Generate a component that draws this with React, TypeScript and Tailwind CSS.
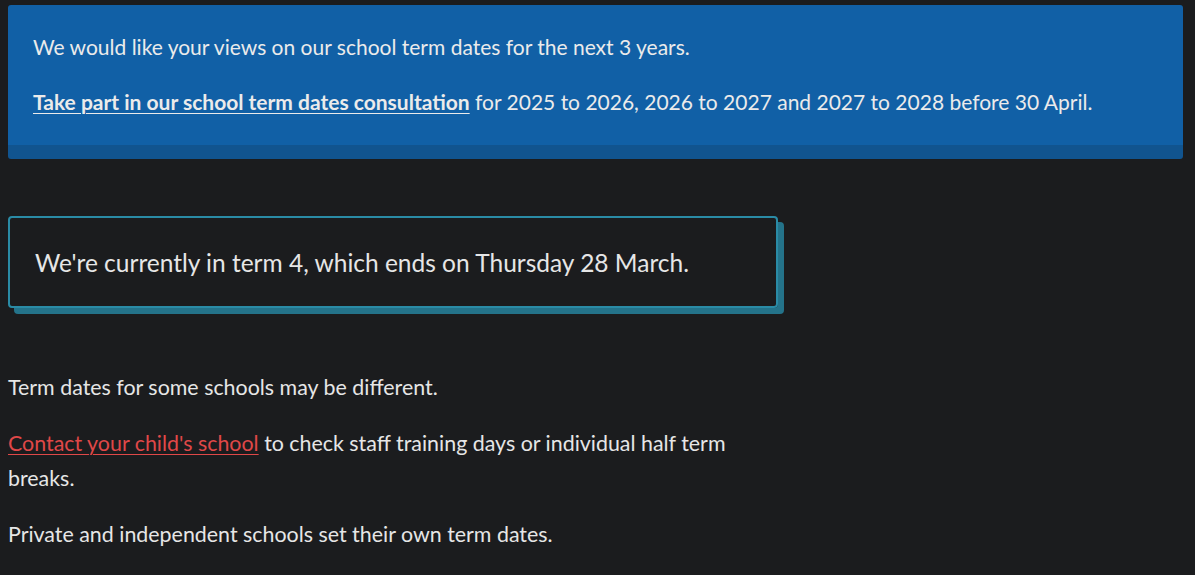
export default function App() {
  return (
    <div
      className="min-h-[575px] bg-[#1b1c1e] pl-2 pr-3 pt-[5px] text-[#e6e6e6]"
      style={{ fontFamily: 'Lato, "Noto Sans", sans-serif' }}
    >
      <div className="rounded-[3px] border-b-[14px] border-[#11548f] bg-[#1160a6] px-[25px] pb-[27px] pt-[26px] text-[21px] leading-[32px] text-[#ebebeb]">
        <p>We would like your views on our school term dates for the next 3 years.</p>
        <p className="mt-[23px]">
          <a href="#" className="font-bold underline underline-offset-[3px] decoration-1">
            Take part in our school term dates consultation
          </a>{' '}
          for 2025 to 2026, 2026 to 2027 and 2027 to 2028 before 30 April.
        </p>
      </div>

      <div className="mt-[57px] w-[770px] rounded-[4px] border-2 border-[#2a8ba6] px-[25px] pb-[28px] pt-[30px] text-[24.5px] leading-[30px] shadow-[6px_6px_0_#24738a]">
        We're currently in term 4, which ends on Thursday 28 March.
      </div>

      <div className="mt-[62px] max-w-[740px] text-[21.4px] leading-[35px]">
        <p>Term dates for some schools may be different.</p>
        <p className="mt-[21px]">
          <a href="#" className="text-[#e04848] underline underline-offset-[3px] decoration-1">
            Contact your child's school
          </a>{' '}
          to check staff training days or individual half term breaks.
        </p>
        <p className="mt-[21px]">Private and independent schools set their own term dates.</p>
      </div>
    </div>
  )
}
